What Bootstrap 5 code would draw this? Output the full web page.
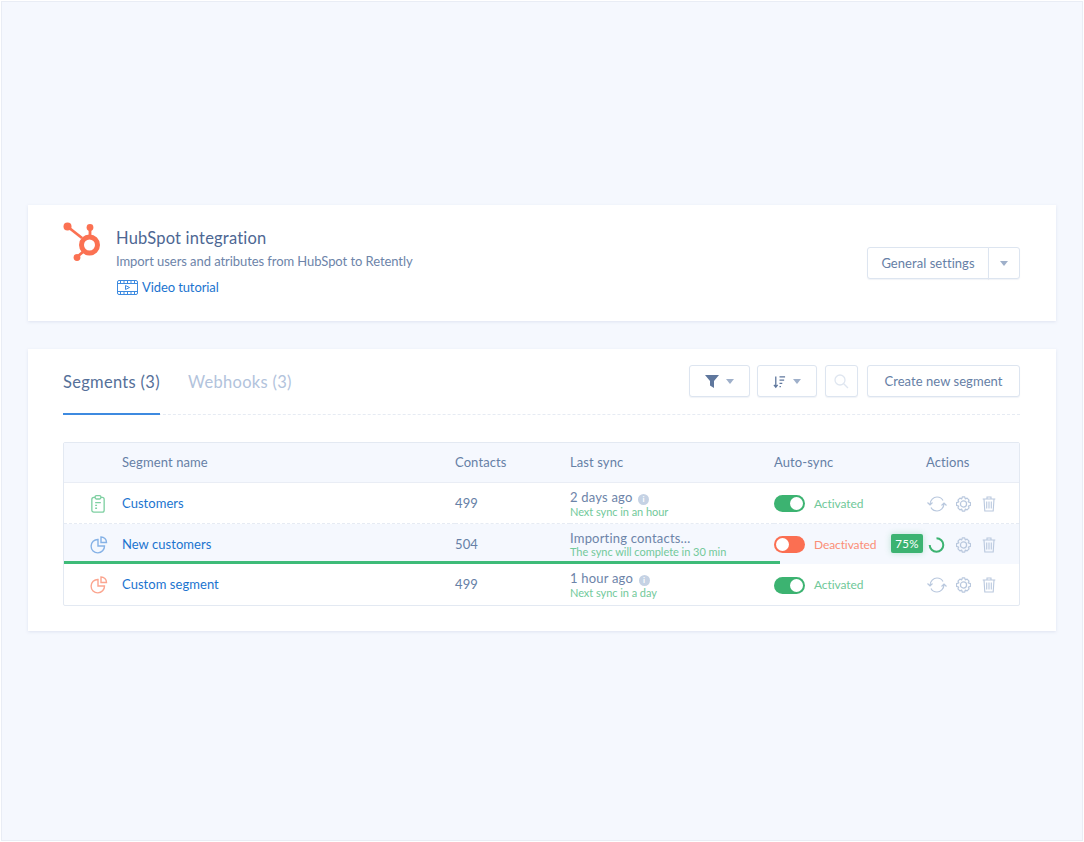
<!DOCTYPE html>
<html lang="en">
<head>
  <meta charset="UTF-8">
  <meta name="viewport" content="width=device-width, initial-scale=1.0">
  <title>HubSpot integration</title>
  <link href="https://cdn.jsdelivr.net/npm/bootstrap@5.3.0/dist/css/bootstrap.min.css" rel="stylesheet">
  <style>
    html, body { height: 100%; }
    body { background: #fff; font-family: "Lato", "Liberation Sans", sans-serif; color: #6680a6; }
    .frame { height: 840px; width: 1082px; margin-left: 1px; margin-top: 1px; background: #f5f8fe; border: 1px solid #e9edf5; padding: 203px 26px 0 26px; }
    .panel { background: #fff; box-shadow: 0 1px 3px rgba(120, 140, 180, .18); }
    .panel-head { height: 116px; padding: 15px 36px 0 34px; }
    .panel-body { height: 282px; margin-top: 28px; padding: 16px 36px 0 35px; }
    .logo { width: 40px; height: 44px; margin-right: 14px; }
    .title-text { font-size: 16.5px; line-height: 20px; color: #4d6793; letter-spacing: .2px; margin-top: 8px; }
    .sub-text { font-size: 13px; line-height: 18px; color: #6d84a9; letter-spacing: -.07px; margin-top: 4px; }
    .tutorial { font-size: 13px; line-height: 18px; color: #1b74cf; text-decoration: none; letter-spacing: -.1px; margin-top: 8px; margin-left: 1px; }
    .btn-plain { background: #fff; border: 1px solid #dde5f0; border-radius: 3px; color: #6680a6; font-size: 13px; letter-spacing: .05px; height: 32px; padding: 1px 0 0; display: inline-flex; align-items: center; justify-content: center; box-shadow: 0 1px 1px rgba(120, 140, 180, .1); }
    .btn-plain.dropdown-toggle::after { border-top: 5px solid #9fb0ca; border-left-width: 4px; border-right-width: 4px; margin-left: 7px; }
    .btn-general { width: 122px; }
    .btn-caret { width: 32px; }
    .btn-caret.dropdown-toggle::after { margin-left: 0; }
    .btn-filter { width: 61px; }
    .btn-sort { width: 60px; margin-left: -1px; }
    .btn-search { width: 33px; }
    .btn-create { width: 153px; margin-left: 1px; }
    .settings-group { margin-top: 27px; }
    .tabs-row { height: 50px; border-bottom: 1px dashed #e6ebf3; }
    .tab-item { font-size: 16.5px; line-height: 34px; letter-spacing: .3px; text-decoration: none; }
    .tab-on { color: #557099; width: 97px; border-bottom: 2px solid #3d8ae0; height: 50px; margin-right: 28px; white-space: nowrap; }
    .tab-off { color: #b2c3dc; white-space: nowrap; }
    .grid-wrap { margin-top: 27px; border: 1px solid #e3e9f2; border-radius: 2px; }
    .seg-table { width: 100%; table-layout: fixed; border-collapse: separate; border-spacing: 0; margin: 0; font-size: 13px; letter-spacing: .1px; color: #6680a6; }
    .seg-table th { height: 40px; background: #f5f8fe; font-weight: 400; color: #6680a6; vertical-align: middle; padding: 0; border-bottom: 1px solid #e9edf5; }
    .seg-table td { height: 41px; padding: 1px 0 0; vertical-align: middle; }
    .row-first td { border-bottom: 1px dashed #e6ebf3; }
    .row-busy { position: relative; }
    .seg-table .row-busy td { background: #f5f8fe; height: 40px; }
    .seg-link { color: #1b74cf; text-decoration: none; letter-spacing: .05px; }
    .seg-icon { display: block; margin-left: 26px; }
    .sync-main { font-size: 13px; line-height: 14px; color: #6d84a9; letter-spacing: .2px; }
    .sync-next { font-size: 11px; line-height: 12px; color: #72c99a; letter-spacing: -.05px; margin-top: 1px; }
    .sync-long { letter-spacing: -.03px; }
    .info-dot { display: inline-flex; width: 11px; height: 11px; border-radius: 50%; background: #c5d2e4; color: #fff; font-size: 8px; line-height: 11px; justify-content: center; margin-left: 2px; font-weight: 700; letter-spacing: 0; }
    .switch-pill { width: 31px; height: 17px; border-radius: 9px; background: #3cb371; position: relative; margin-right: 9px; flex: none; }
    .switch-pill::after { content: ""; position: absolute; top: 2px; right: 2px; width: 13px; height: 13px; border-radius: 50%; background: #fff; }
    .switch-off { background: #fb6f52; }
    .switch-off::after { right: auto; left: 2px; }
    .state-on { font-size: 12px; color: #70c899; letter-spacing: -.1px; }
    .state-off { font-size: 12px; color: #fb8e76; letter-spacing: -.1px; }
    .cell-sync { position: relative; }
    .pct-tag { position: absolute; right: 3px; top: 10px; width: 32px; height: 19px; background: #3cb371; color: #fff; font-size: 11.5px; line-height: 19px; text-align: center; border-radius: 2px; box-shadow: 0 0 6px rgba(60, 179, 113, .3); letter-spacing: .3px; }
    .busy-bar { position: absolute; left: 0; bottom: 0; height: 3px; background: #3ebb78; }
    .action-set { gap: 9px; padding-left: 1px; }
    .ico-sync { width: 20px; height: 16px; }
    .ico-gear { width: 15px; height: 16px; }
    .ico-trash { width: 14px; height: 16px; margin-left: 2px; }
  </style>
</head>
<body>
  <svg class="d-none">
    <symbol id="i-sync" viewBox="0 0 20 16"><path fill="none" stroke="#b9c8de" stroke-width="1.2" d="M3 8.500C3 4 6.500 1 10 1C13 1 15 2.500 16 4.500M17 7.500C17 12 13.500 15 10 15C7 15 5 13.500 4 11.500M.5 6.500L3 9L5.500 6.500M14.500 9.500L17 7L19.500 9.500"/></symbol>
    <symbol id="i-gear" viewBox=".7 .5 14.600 15"><g fill="none" stroke="#b9c8de" stroke-width="1.200"><circle cx="8" cy="8" r="3"/><path stroke-linejoin="round" d="M6.800 1H9.200L9.700 3L11.500 2.300L13.400 4.200L12.600 5.900L14.800 6.600V9.400L12.700 10L13.400 11.800L11.500 13.700L9.700 13L9.200 15H6.800L6.300 13L4.500 13.700L2.600 11.800L3.300 10L1.200 9.400V6.600L3.400 5.900L2.600 4.200L4.500 2.300L6.300 3Z"/></g></symbol>
    <symbol id="i-trash" viewBox="0 0 14 16"><path fill="none" stroke="#b9c8de" stroke-width="1.100" d="M.7 3H13.300M5 3V1H9V3M2 3L2.800 15H11.200L12 3M4.700 5.500V12.500M7 5.500V12.500M9.300 5.500V12.500"/></symbol>
    <symbol id="i-pie" viewBox="0 0 18 18"><path fill="none" stroke="currentColor" stroke-width="1.400" d="M8 3.500A6.700 6.700 0 1 0 14.500 10H8Z"/><path fill="none" stroke="currentColor" stroke-width="1.400" d="M11 1V6.500H16.500A5.500 5.500 0 0 0 11 1Z"/></symbol>
  </svg>
  <div class="frame">
    <div class="panel panel-head d-flex">
      <svg class="logo flex-none" viewBox="0 0 40 44">
        <g fill="none" stroke="#fb7152">
          <path d="M6 7 L20 18" stroke-width="2.800"/>
          <path d="M28 8 V17" stroke-width="2.800"/>
          <path d="M15 37 L22 31" stroke-width="2.800"/>
          <circle cx="27.500" cy="25" r="8" stroke-width="5"/>
        </g>
        <g fill="#fb7152">
          <circle cx="5.500" cy="6.500" r="4"/>
          <circle cx="28" cy="7.500" r="3.400"/>
          <circle cx="15" cy="37.500" r="3.400"/>
        </g>
      </svg>
      <div class="flex-grow-1 d-flex flex-column align-items-start">
        <div class="title-text">HubSpot integration</div>
        <div class="sub-text">Import users and atributes from HubSpot to Retently</div>
        <a href="#" class="tutorial d-flex align-items-center gap-1">
          <svg width="21" height="15" viewBox="0 0 21 15" fill="none" stroke="#3d8ae0" stroke-width="1">
            <rect x=".5" y=".5" width="20" height="14" rx="1.500"/>
            <path d="M.5 3.500H20.500M.5 11.500H20.500M3.500 .5V3.500M7 .5V3.500M10.500 .5V3.500M14 .5V3.500M17.500 .5V3.500M3.500 11.500V14.500M7 11.500V14.500M10.500 11.500V14.500M14 11.500V14.500M17.500 11.500V14.500"/>
            <path d="M8.500 5.500L12.500 7.500L8.500 9.500Z"/>
          </svg>
          <span>Video tutorial</span>
        </a>
      </div>
      <div class="btn-group settings-group align-self-start">
        <button class="btn btn-plain btn-general" type="button">General settings</button>
        <button class="btn btn-plain btn-caret dropdown-toggle" type="button"></button>
      </div>
    </div>

    <div class="panel panel-body">
      <div class="tabs-row d-flex justify-content-between align-items-start">
        <div class="d-flex">
          <a href="#" class="tab-item tab-on">Segments (3)</a>
          <a href="#" class="tab-item tab-off">Webhooks (3)</a>
        </div>
        <div class="d-flex gap-2">
          <button class="btn btn-plain btn-filter dropdown-toggle" type="button">
            <svg width="14" height="13" viewBox="0 0 14 13"><path d="M0 0H14L9 6V13L5 10.500V6Z" fill="#5f779d"/></svg>
          </button>
          <button class="btn btn-plain btn-sort dropdown-toggle" type="button">
            <svg width="13" height="14" viewBox="0 0 14 14" fill="none" stroke="#5f779d" stroke-width="1.400"><path d="M3 1V12M1 10L3 12.500L5 10M7 1.500H13M7 5H12M7 8.500H10M7 12H8.500"/></svg>
          </button>
          <button class="btn btn-plain btn-search" type="button">
            <svg width="15" height="15" viewBox="0 0 15 15" fill="none" stroke="#dfe6f0" stroke-width="1.300"><circle cx="6" cy="6" r="5"/><path d="M9.700 9.700L14 14"/></svg>
          </button>
          <button class="btn btn-plain btn-create" type="button">Create new segment</button>
        </div>
      </div>

      <div class="grid-wrap">
        <table class="seg-table">
          <colgroup>
            <col style="width:58px"><col style="width:333px"><col style="width:115px"><col style="width:204px"><col style="width:152px"><col>
          </colgroup>
          <thead>
            <tr><th></th><th>Segment name</th><th>Contacts</th><th>Last sync</th><th>Auto-sync</th><th>Actions</th></tr>
          </thead>
          <tbody>
            <tr class="row-first">
              <td>
                <svg class="seg-icon" width="16" height="18" viewBox="0 0 16 19" fill="none" stroke="#7fd0a2" stroke-width="1.400"><rect x="1.500" y="2.500" width="13" height="15.500" rx="2"/><rect x="5" y=".7" width="6" height="3.500" rx="1.200" fill="#fff"/><path d="M5 8H11M5 11H7M5 14H7"/></svg>
              </td>
              <td><a href="#" class="seg-link">Customers</a></td>
              <td>499</td>
              <td><div class="sync-main">2 days ago <span class="info-dot">i</span></div><div class="sync-next">Next sync in an hour</div></td>
              <td><div class="d-flex align-items-center"><span class="switch-pill"></span><span class="state-on">Activated</span></div></td>
              <td>
                <div class="d-flex align-items-center action-set">
                  <svg class="ico-sync"><use href="#i-sync"/></svg>
                  <svg class="ico-gear"><use href="#i-gear"/></svg>
                  <svg class="ico-trash"><use href="#i-trash"/></svg>
                </div>
              </td>
            </tr>
            <tr class="row-busy">
              <td>
                <svg class="seg-icon" width="18" height="18" color="#86b2e6"><use href="#i-pie"/></svg>
              </td>
              <td><a href="#" class="seg-link">New customers</a></td>
              <td>504</td>
              <td><div class="sync-main">Importing contacts…</div><div class="sync-next sync-long">The sync will complete in 30 min</div></td>
              <td class="cell-sync">
                <div class="d-flex align-items-center"><span class="switch-pill switch-off"></span><span class="state-off">Deactivated</span></div>
                <span class="pct-tag">75%</span>
              </td>
              <td>
                <div class="d-flex align-items-center action-set">
                  <svg width="20" height="16" viewBox="0 0 20 16" fill="none" stroke="#3cb371" stroke-width="2"><path d="M9.500 1.200A6.800 6.800 0 1 1 2.700 8"/></svg>
                  <svg class="ico-gear"><use href="#i-gear"/></svg>
                  <svg class="ico-trash"><use href="#i-trash"/></svg>
                </div>
                <div class="busy-bar" style="width:75%"></div>
              </td>
            </tr>
            <tr>
              <td>
                <svg class="seg-icon" width="18" height="18" color="#fba58f"><use href="#i-pie"/></svg>
              </td>
              <td><a href="#" class="seg-link">Custom segment</a></td>
              <td>499</td>
              <td><div class="sync-main">1 hour ago <span class="info-dot">i</span></div><div class="sync-next">Next sync in a day</div></td>
              <td><div class="d-flex align-items-center"><span class="switch-pill"></span><span class="state-on">Activated</span></div></td>
              <td>
                <div class="d-flex align-items-center action-set">
                  <svg class="ico-sync"><use href="#i-sync"/></svg>
                  <svg class="ico-gear"><use href="#i-gear"/></svg>
                  <svg class="ico-trash"><use href="#i-trash"/></svg>
                </div>
              </td>
            </tr>
          </tbody>
        </table>
      </div>
    </div>
  </div>
  <script src="https://cdn.jsdelivr.net/npm/bootstrap@5.3.0/dist/js/bootstrap.bundle.min.js"></script>
</body>
</html>
